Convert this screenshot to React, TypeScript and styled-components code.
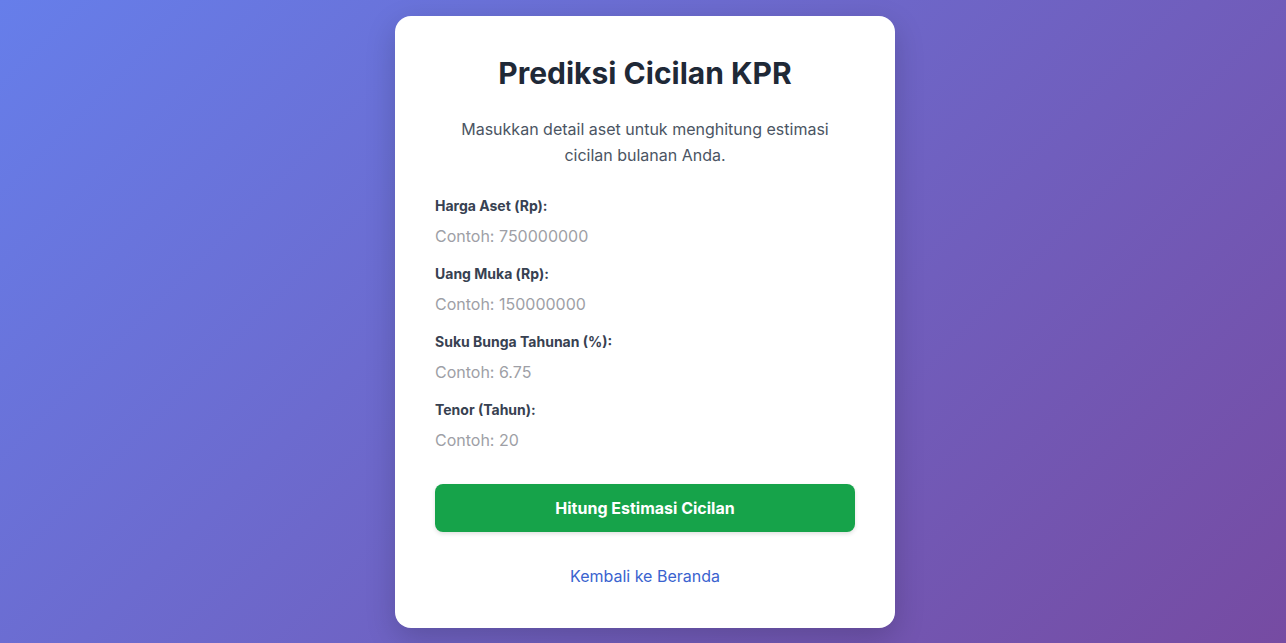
import React from "react";
import styled, { createGlobalStyle } from "styled-components";

const Global = createGlobalStyle`
  * { box-sizing: border-box; }
  html, body { margin: 0; padding: 0; }
  body {
    font-family: Inter, "Noto Sans", sans-serif;
    background: linear-gradient(135deg, #667eea 0%, #764ba2 100%);
    min-height: 100vh;
  }
`;

const Page = styled.main`
  min-height: 100vh;
  display: flex;
  align-items: center;
  justify-content: center;
  padding-left: 4px;
`;

const Card = styled.section`
  width: 500px;
  background: #ffffff;
  border-radius: 16px;
  padding: 40px 40px 42px;
  box-shadow: 0 10px 30px rgba(0, 0, 0, 0.18);
  display: flex;
  flex-direction: column;
`;

const Title = styled.h1`
  margin: 0 0 26px;
  font-size: 30px;
  line-height: 34px;
  font-weight: 700;
  color: #1f2937;
  text-align: center;
`;

const Subtitle = styled.p`
  margin: 0 0 28px;
  padding: 0 10px;
  font-size: 16px;
  line-height: 26px;
  color: #4b5563;
  text-align: center;
`;

const Form = styled.form`
  display: flex;
  flex-direction: column;
`;

const Field = styled.div`
  display: flex;
  flex-direction: column;
  margin-bottom: 14px;
`;

const Label = styled.label`
  font-size: 14px;
  line-height: 20px;
  font-weight: 700;
  color: #374151;
  margin-bottom: 6px;
`;

const Input = styled.input`
  border: none;
  outline: none;
  background: transparent;
  padding: 4px 0;
  font-family: inherit;
  font-size: 16px;
  line-height: 20px;
  height: 28px;
  color: #111827;
  &::placeholder { color: #9e9fa6; }
`;

const Button = styled.button`
  margin-top: 16px;
  height: 48px;
  border: none;
  border-radius: 8px;
  background: #16a34a;
  color: #ffffff;
  font-family: inherit;
  font-size: 16px;
  font-weight: 700;
  box-shadow: 0 2px 4px rgba(0, 0, 0, 0.12);
  cursor: pointer;
`;

const BackLink = styled.a`
  margin-top: 34px;
  align-self: center;
  font-size: 16px;
  line-height: 20px;
  color: #3a63cf;
  text-decoration: none;
`;

const fields = [
  { label: "Harga Aset (Rp):", placeholder: "Contoh: 750000000" },
  { label: "Uang Muka (Rp):", placeholder: "Contoh: 150000000" },
  { label: "Suku Bunga Tahunan (%):", placeholder: "Contoh: 6.75" },
  { label: "Tenor (Tahun):", placeholder: "Contoh: 20" },
];

export default function App() {
  return (
    <>
      <Global />
      <Page>
        <Card>
          <Title>Prediksi Cicilan KPR</Title>
          <Subtitle>
            Masukkan detail aset untuk menghitung estimasi cicilan bulanan Anda.
          </Subtitle>
          <Form onSubmit={(e) => e.preventDefault()}>
            {fields.map((f) => (
              <Field key={f.label}>
                <Label>{f.label}</Label>
                <Input type="text" placeholder={f.placeholder} />
              </Field>
            ))}
            <Button type="submit">Hitung Estimasi Cicilan</Button>
          </Form>
          <BackLink href="#">Kembali ke Beranda</BackLink>
        </Card>
      </Page>
    </>
  );
}
